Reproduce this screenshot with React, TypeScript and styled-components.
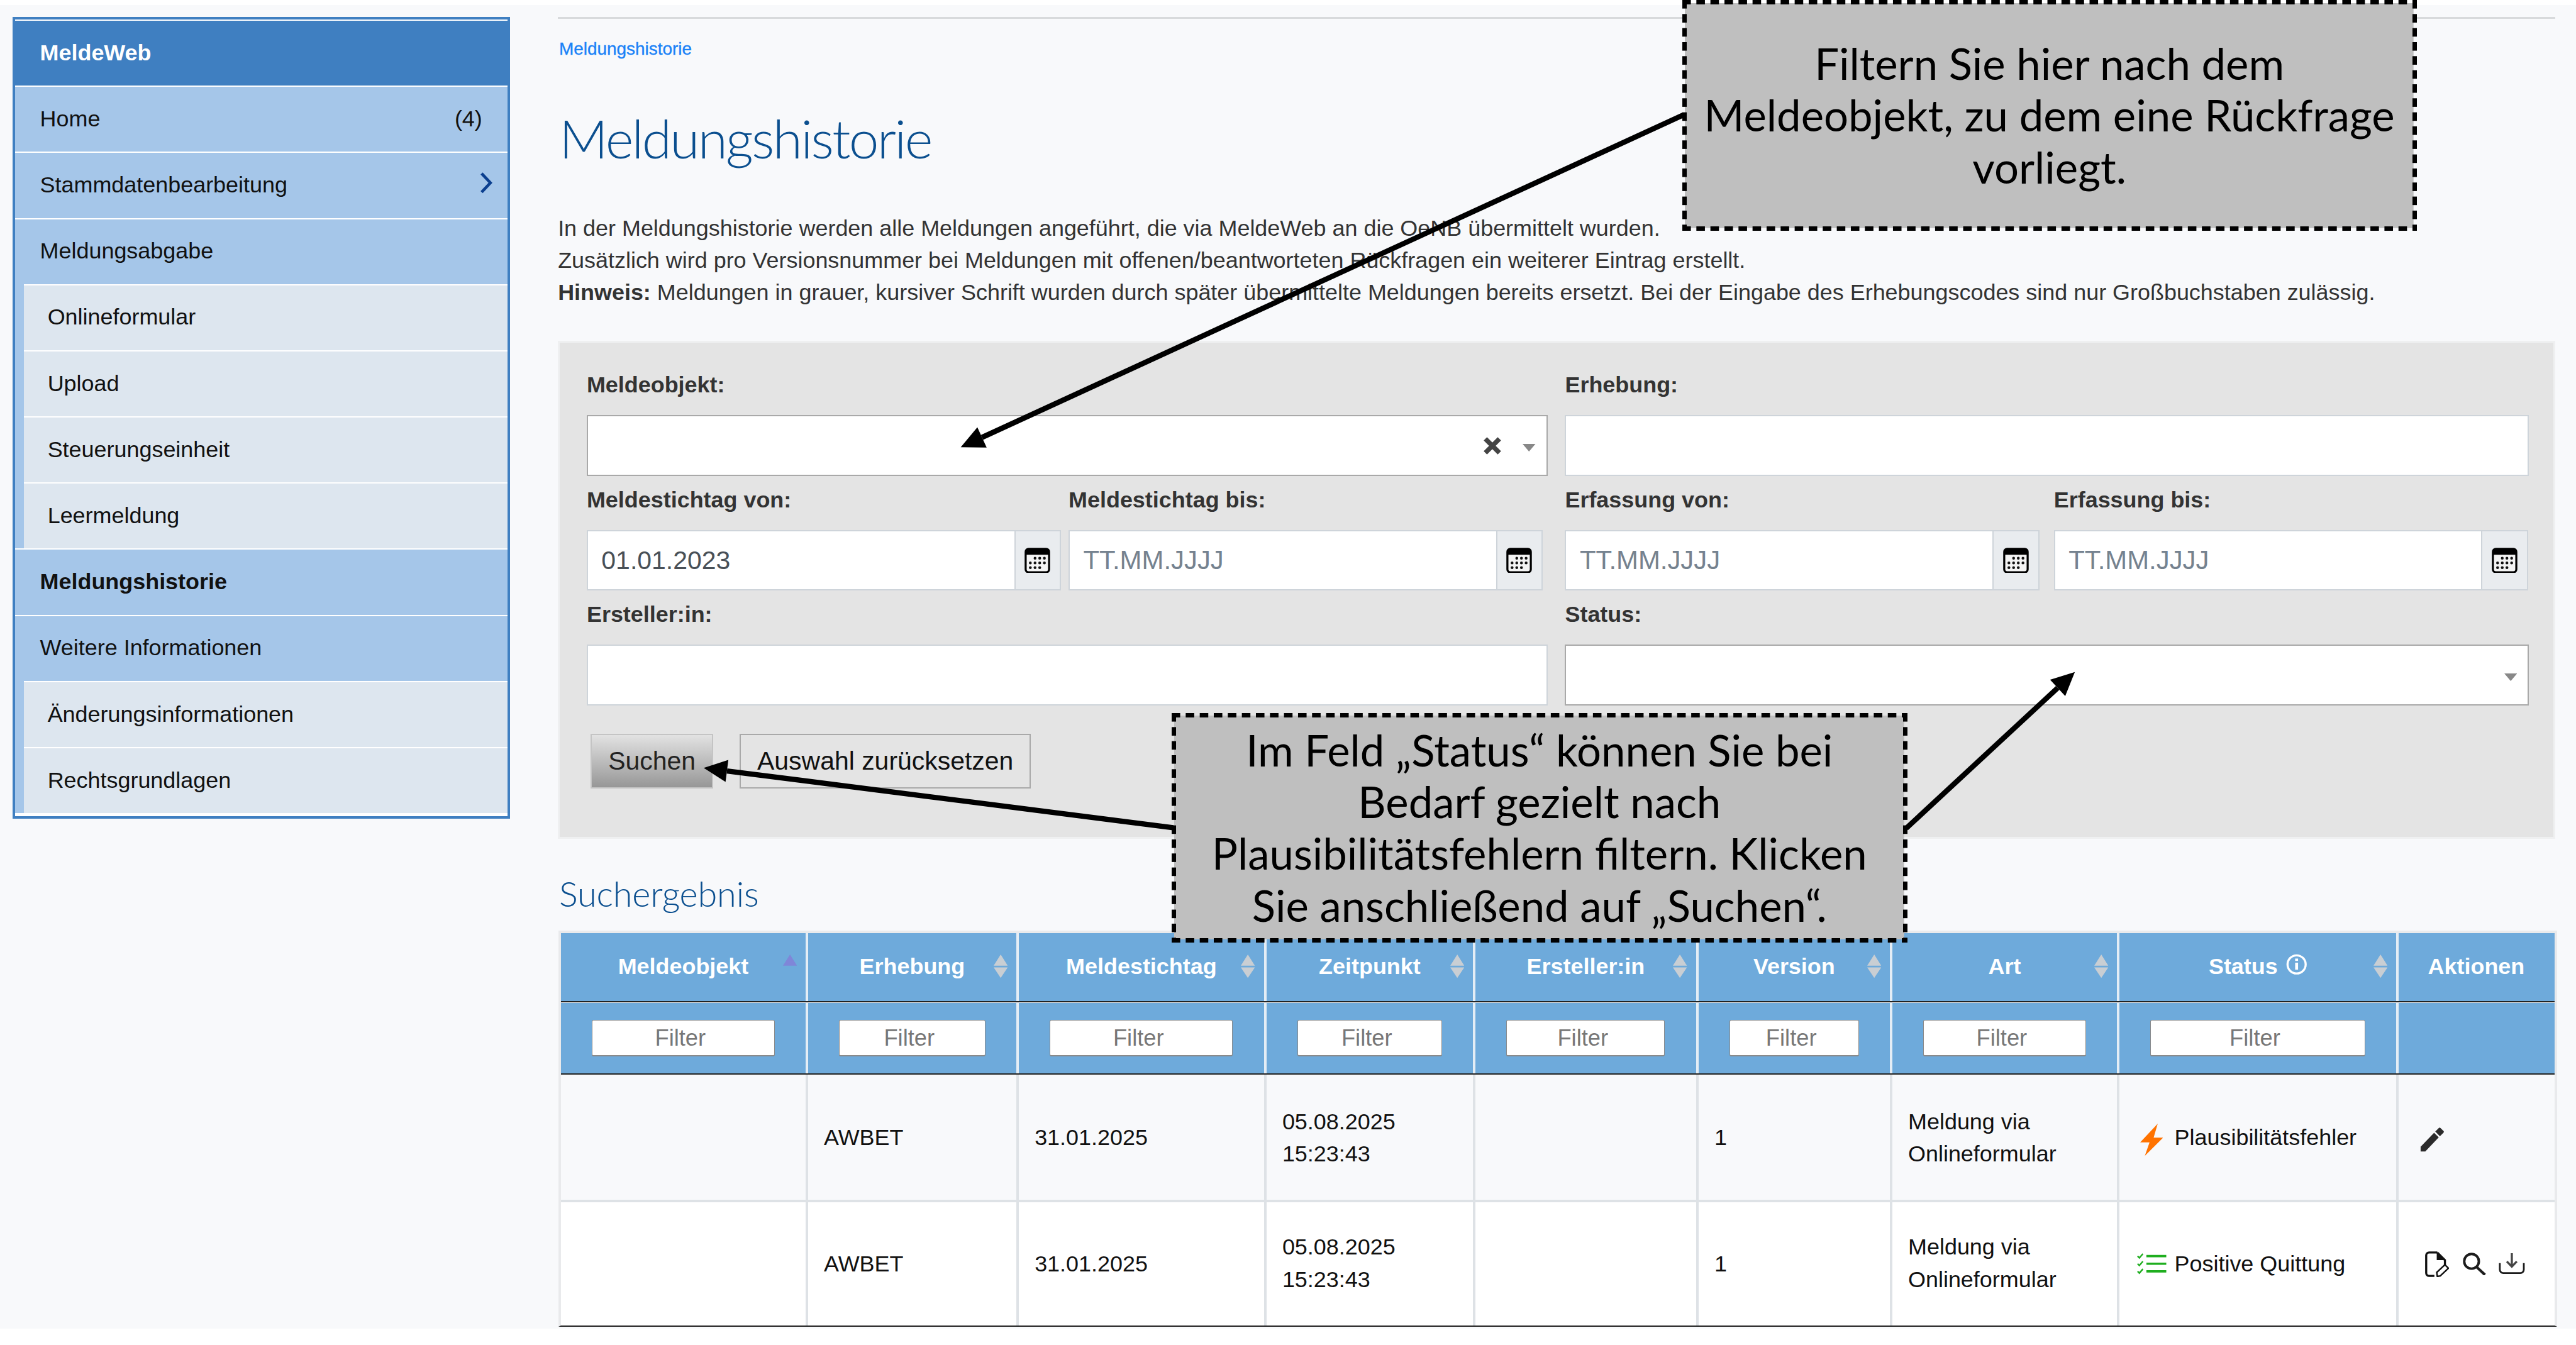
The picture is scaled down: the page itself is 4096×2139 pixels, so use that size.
import React from 'react';
import styled, { createGlobalStyle } from 'styled-components';

const GlobalStyle = createGlobalStyle`
    html, body {
        margin: 0;
        padding: 0;
        background: #ffffff;
        overflow: hidden;
    }
    * {
        box-sizing: border-box;
    }
`;

// the whole page is written in the reference's own pixels and zoomed down to the window
const Page = styled.div`
    position: relative;
    width: 4400px;
    height: 2298px;
    zoom: 0.930909;
    overflow: hidden;
    padding-top: 9px;
    font-family: "Liberation Sans", Arial, sans-serif;
    font-size: 38.6px;
    color: #212529;
`;

const Body = styled.div`
    display: flex;
    align-items: flex-start;
    height: 2261px;
    background: #f8f9fb;
    overflow: hidden;
`;

/* ---------- sidebar ---------- */

const Sidebar = styled.nav`
    flex: none;
    width: 849px;
    margin: 20px 0 0 22px;
    border: 5px solid #3f7fc1;
    background: #a5c6e9;
`;

const SideHeader = styled.div`
    display: flex;
    align-items: center;
    height: 113px;
    padding: 0 0 2px 42px;
    border-top: 3px solid #ffffff;
    background: #3f7fc1;
    color: #ffffff;
    font-weight: 700;
`;

const SideItem = styled.div<{ $bold?: boolean }>`
    display: flex;
    align-items: center;
    justify-content: space-between;
    height: 113px;
    padding: 0 43px 2px 42px;
    border-top: 3px solid #ffffff;
    color: #111111;
    font-weight: ${(p) => (p.$bold ? 700 : 400)};
`;

const SubList = styled.div`
    padding-left: 14px;
`;

const SubItem = styled.div`
    display: flex;
    align-items: center;
    height: 113px;
    padding: 0 0 2px 41px;
    border-top: 3px solid #ffffff;
    background: #dde6ef;
    color: #111111;
`;

const SideEnd = styled.div`
    height: 5px;
    background: #ffffff;
`;

const Chevron = styled.svg`
    width: 22px;
    height: 36px;
    margin: -6px -18px 0 0;
`;

/* ---------- main column ---------- */

const Main = styled.main`
    flex: none;
    width: 3415px;
    margin-left: 82px;
`;

const TopRule = styled.div`
    height: 3px;
    margin: 20px 3px 0 0;
    background: #d8dadc;
`;

const Breadcrumb = styled.div`
    margin: 34px 0 0 2px;
    font-size: 30px;
    line-height: 36px;
    color: #1a82f7;
    -webkit-text-stroke: 0.4px #1a82f7;
`;

const Title = styled.h1`
    margin: 79px 0 0 2px;
    font-family: Lato, "Open Sans", sans-serif;
    font-weight: 300;
    font-size: 92px;
    line-height: 110px;
    letter-spacing: -2.9px;
    color: #0b4f8f;
`;

const Intro = styled.p`
    margin: 71px 0 0;
    line-height: 55px;
    color: #333333;
    white-space: nowrap;
`;

/* ---------- filter form ---------- */

const FormPanel = styled.section`
    height: 851px;
    margin: 55px 3px 0 0;
    padding: 50px 0 0 46px;
    border: 4px solid #eff0f1;
    background: #e4e4e4;
`;

const FormRow = styled.div`
    display: grid;
    grid-template-columns: 1641px 1646px;
    column-gap: 30px;
    margin-bottom: 18px;
`;

const DateGroup = styled.div<{ $gap: number }>`
    display: grid;
    grid-template-columns: 810px 810px;
    column-gap: ${(p) => p.$gap}px;
`;

const Label = styled.label`
    display: block;
    height: 46px;
    margin-bottom: 28px;
    font-weight: 700;
    line-height: 46px;
    color: #333333;
`;

const TextInput = styled.input`
    display: block;
    width: 100%;
    height: 104px;
    padding: 0 23px;
    border: 3px solid #ced4da;
    border-radius: 0;
    outline: none;
    background: #ffffff;
    font-family: inherit;
    font-size: 44px;
    color: #495057;
`;

const SelectBox = styled.div`
    display: flex;
    align-items: center;
    justify-content: flex-end;
    gap: 37px;
    height: 104px;
    padding-right: 18px;
    border: 3px solid #a9a9a9;
    background: #ffffff;
`;

const ClearIcon = styled.svg`
    width: 30px;
    height: 30px;
`;

const Caret = styled.svg`
    width: 22px;
    height: 13px;
    margin-top: 8px;
`;

const DateBox = styled.div`
    display: flex;
    height: 104px;
`;

const DateInput = styled(TextInput)`
    flex: 1;
    min-width: 0;
    height: 100%;
    border-right: none;
    &::placeholder {
        color: #75828f;
        font-size: 45px;
        opacity: 1;
    }
`;

const DateAddon = styled.div`
    flex: none;
    display: flex;
    align-items: center;
    justify-content: center;
    width: 80px;
    border: 3px solid #ced4da;
    background: #e9ecef;
`;

const ButtonRow = styled.div`
    display: flex;
    gap: 45px;
    margin: 49px 0 0 7px;
`;

const SearchButton = styled.button`
    width: 209px;
    height: 93px;
    padding: 0;
    border: 3px solid #c4c4c4;
    background: linear-gradient(#e2e2e2, #979797);
    font-family: inherit;
    font-size: 44px;
    color: #222222;
`;

const ResetButton = styled(SearchButton)`
    width: 498px;
    border-color: #a9a9a9;
    background: #e4e4e4;
    color: #111111;
`;

/* ---------- result table ---------- */

const SectionTitle = styled.h2`
    margin: 57px 0 0 2px;
    font-family: Lato, "Open Sans", sans-serif;
    font-weight: 300;
    font-size: 60px;
    line-height: 72px;
    letter-spacing: -0.2px;
    color: #0b4f8f;
`;

const Table = styled.div`
    margin: 28px 0 0 1px;
    border: 5px solid #e9eaec;
    border-bottom: 3px solid #222222;
`;

const Row = styled.div`
    display: grid;
    grid-template-columns: 422px 360px 423px 357px 381px 331px 388px 477px 265px;
`;

const HeadRow = styled(Row)`
    height: 118px;
    border-bottom: 3px solid #222222;
    background: #6eaadb;
`;

const FilterRow = styled(Row)`
    height: 124px;
    border-top: 2px solid #e8eff5;
    border-bottom: 3px solid #222222;
    background: #6eaadb;
`;

const BodyRow = styled(Row)<{ $white?: boolean; $last?: boolean }>`
    height: ${(p) => (p.$last ? 210 : 218)}px;
    border-bottom: ${(p) => (p.$last ? 0 : 5)}px solid #dee2e6;
    background: ${(p) => (p.$white ? '#ffffff' : '#f8f9fb')};
`;

const HeadCell = styled.div`
    position: relative;
    display: flex;
    align-items: center;
    justify-content: center;
    gap: 14px;
    padding-bottom: 2px;
    border-right: 5px solid #e4edf5;
    color: #ffffff;
    font-weight: 700;
    &:last-child {
        border-right: none;
    }
`;

const SortMark = styled.svg`
    position: absolute;
    top: 36px;
    right: 15px;
    width: 24px;
    height: 40px;
`;

const InfoMark = styled.svg`
    width: 36px;
    height: 36px;
    margin-top: -8px;
`;

const FilterCell = styled.div`
    display: flex;
    align-items: center;
    padding: 0 53px;
    border-right: 5px solid #e4edf5;
    &:last-child {
        border-right: none;
    }
`;

const FilterInput = styled.input`
    width: 100%;
    height: 62px;
    padding: 0 10px 0 0;
    border: 2px solid #8a8a8a;
    border-bottom-width: 3px;
    border-radius: 3px;
    outline: none;
    background: #ffffff;
    font-family: inherit;
    font-size: 39px;
    text-align: center;
    &::placeholder {
        color: #777777;
        opacity: 1;
    }
`;

const Cell = styled.div<{ $lift?: number }>`
    display: flex;
    align-items: center;
    padding-left: 27px;
    padding-bottom: ${(p) => p.$lift ?? 0}px;
    border-right: 5px solid #dee2e6;
    line-height: 55px;
    color: #111111;
    &:last-child {
        border-right: none;
    }
`;

const StatusCell = styled(Cell)`
    gap: 14px;
    padding-left: 30px;
`;

const StatusSlot = styled.span<{ $drop?: number }>`
    flex: none;
    display: flex;
    justify-content: center;
    width: 50px;
    margin-top: ${(p) => p.$drop ?? 0}px;
`;

const ActionCell = styled(Cell)<{ $pad: number }>`
    padding-left: ${(p) => p.$pad}px;
    gap: 22px;
`;

const PencilSlot = styled.span`
    display: flex;
    margin-top: 7px;
`;

/* ---------- callouts ---------- */

// dashes longer than a css dashed border gives, so the frame is four repeating gradients
const Callout = styled.div<{ $left: number; $top: number; $width: number; $height: number }>`
    position: absolute;
    left: ${(p) => p.$left}px;
    top: ${(p) => p.$top}px;
    width: ${(p) => p.$width}px;
    height: ${(p) => p.$height}px;
    display: flex;
    align-items: center;
    justify-content: center;
    background:
        linear-gradient(to right, #000 62%, transparent 0) left top / 24px 7px repeat-x,
        linear-gradient(to right, #000 62%, transparent 0) left bottom / 24px 7px repeat-x,
        linear-gradient(to bottom, #000 62%, transparent 0) left top / 7px 24px repeat-y,
        linear-gradient(to bottom, #000 62%, transparent 0) right top / 7px 24px repeat-y,
        linear-gradient(#bfbfbf, #bfbfbf) center / calc(100% - 10px) calc(100% - 10px) no-repeat;
    font-family: Lato, sans-serif;
    font-size: 74px;
    line-height: 88.5px;
    text-align: center;
    color: #000000;
`;

const ArrowLayer = styled.svg`
    position: absolute;
    left: 0;
    top: 0;
    width: 4400px;
    height: 2298px;
    pointer-events: none;
`;

function Arrow({ x1, y1, x2, y2 }: { x1: number; y1: number; x2: number; y2: number }) {
    const len = Math.hypot(x2 - x1, y2 - y1);
    const ux = (x2 - x1) / len;
    const uy = (y2 - y1) / len;
    const bx = x2 - ux * 40;
    const by = y2 - uy * 40;
    const head = `${x2},${y2} ${bx - uy * 19},${by + ux * 19} ${bx + uy * 19},${by - ux * 19}`;
    return (
        <>
            <line x1={x1} y1={y1} x2={bx} y2={by} stroke="#000" strokeWidth="9" />
            <polygon points={head} fill="#000" />
        </>
    );
}

/* ---------- icons ---------- */

function CalendarIcon() {
    const dots = [
        [18, 18], [26, 18], [34, 18],
        [10, 26], [18, 26], [26, 26], [34, 26],
        [10, 34], [18, 34], [26, 34],
    ];
    return (
        <svg width="44" height="44" viewBox="0 0 44 44">
            <rect x="2" y="2" width="40" height="40" rx="5" fill="#f4f4f4" stroke="#000" strokeWidth="3.5" />
            <path d="M2 7a5 5 0 0 1 5-5h30a5 5 0 0 1 5 5v5H2z" fill="#000" />
            {dots.map(([x, y]) => (
                <circle key={`${x}-${y}`} cx={x} cy={y} r="2.4" fill="#111" />
            ))}
        </svg>
    );
}

function SortIcon({ active }: { active?: boolean }) {
    return (
        <SortMark viewBox="0 0 24 40">
            <polygon points="12,0 24,19 0,19" fill={active ? '#7f86d8' : '#c9ced3'} />
            {!active && <polygon points="0,22 24,22 12,40" fill="#c9ced3" />}
        </SortMark>
    );
}

function BoltIcon() {
    return (
        <svg width="39" height="55" viewBox="0 0 39 55">
            <polygon points="30,0 0,32 16,32 8,55 39,24 23,24" fill="#ff7300" />
        </svg>
    );
}

function CheckListIcon() {
    return (
        <svg width="50" height="36" viewBox="0 0 50 36" fill="none" stroke="#1fae1f">
            <path d="M16 5h34M16 18h34M16 31h34" strokeWidth="4" />
            <path d="M1 5l3 3 6-7M1 18l3 3 6-7M1 31l3 3 6-7" strokeWidth="2.6" />
        </svg>
    );
}

function PencilIcon() {
    return (
        <svg width="42" height="42" viewBox="0 0 42 42">
            <path d="M1 33v8h8L32 17l-8-8z" fill="#2b2b2b" />
            <path d="M34 15l6-6c1-1 1-2 0-3l-5-5c-1-1-2-1-3 0l-6 6z" fill="#2b2b2b" />
        </svg>
    );
}

function FilePenIcon() {
    return (
        <svg width="42" height="44" viewBox="0 0 42 44" fill="none">
            <path d="M22 2H8a5 5 0 0 0-5 5v30a5 5 0 0 0 5 5h9" stroke="#111" strokeWidth="3.6" />
            <path d="M22 2l13 13v9" stroke="#111" strokeWidth="3.6" />
            <path d="M21 1v14h14z" fill="#111" />
            <path d="M22 43l-1-7 14-13 6 6-14 13z" fill="#fff" stroke="#111" strokeWidth="2.6" />
        </svg>
    );
}

function SearchIcon() {
    return (
        <svg width="41" height="39" viewBox="0 0 41 39" fill="none" stroke="#1c1c1c">
            <circle cx="16" cy="15" r="12.5" strokeWidth="4.2" />
            <path d="M25 25l14 13" strokeWidth="4.6" />
        </svg>
    );
}

function DownloadIcon() {
    return (
        <svg width="45" height="36" viewBox="0 0 45 36" fill="none">
            <path d="M22.5 0v22M14 14l8.500 9 8.500-9" stroke="#444" strokeWidth="3.6" />
            <path d="M2 17v11a6 6 0 0 0 6 6h29a6 6 0 0 0 6-6V17" stroke="#1c1c1c" strokeWidth="3" />
        </svg>
    );
}

const columns = [
    { title: 'Meldeobjekt', filter: true, sort: 'asc' },
    { title: 'Erhebung', filter: true, sort: 'both' },
    { title: 'Meldestichtag', filter: true, sort: 'both' },
    { title: 'Zeitpunkt', filter: true, sort: 'both' },
    { title: 'Ersteller:in', filter: true, sort: 'both' },
    { title: 'Version', filter: true, sort: 'both' },
    { title: 'Art', filter: true, sort: 'both' },
    { title: 'Status', filter: true, sort: 'both', info: true },
    { title: 'Aktionen', filter: false, sort: '' },
];

function DateField({ label, value }: { label: string; value?: string }) {
    return (
        <div>
            <Label>{label}</Label>
            <DateBox>
                <DateInput readOnly placeholder="TT.MM.JJJJ" defaultValue={value} />
                <DateAddon>
                    <CalendarIcon />
                </DateAddon>
            </DateBox>
        </div>
    );
}

function ResultRow({ white, last, children }: { white?: boolean; last?: boolean; children: React.ReactNode }) {
    const lift = last ? 3 : 0;
    return (
        <BodyRow $white={white} $last={last}>
            <Cell />
            <Cell>AWBET</Cell>
            <Cell>31.01.2025</Cell>
            <Cell $lift={lift}>
                <div>05.08.2025<br />15:23:43</div>
            </Cell>
            <Cell />
            <Cell>1</Cell>
            <Cell $lift={lift}>
                <div>Meldung via<br />Onlineformular</div>
            </Cell>
            {children}
        </BodyRow>
    );
}

export default function App() {
    return (
        <Page>
            <GlobalStyle />
            <Body>
                <Sidebar>
                    <SideHeader>MeldeWeb</SideHeader>
                    <SideItem>
                        Home <span>(4)</span>
                    </SideItem>
                    <SideItem>
                        Stammdatenbearbeitung
                        <Chevron viewBox="0 0 22 36" fill="none" stroke="#0b3f8f" strokeWidth="5">
                            <path d="M3 2l15 16L3 34" />
                        </Chevron>
                    </SideItem>
                    <SideItem>Meldungsabgabe</SideItem>
                    <SubList>
                        <SubItem>Onlineformular</SubItem>
                        <SubItem>Upload</SubItem>
                        <SubItem>Steuerungseinheit</SubItem>
                        <SubItem>Leermeldung</SubItem>
                    </SubList>
                    <SideItem $bold>Meldungshistorie</SideItem>
                    <SideItem>Weitere Informationen</SideItem>
                    <SubList>
                        <SubItem>Änderungsinformationen</SubItem>
                        <SubItem>Rechtsgrundlagen</SubItem>
                    </SubList>
                    <SideEnd />
                </Sidebar>

                <Main>
                    <TopRule />
                    <Breadcrumb>Meldungshistorie</Breadcrumb>
                    <Title>Meldungshistorie</Title>
                    <Intro>
                        In der Meldungshistorie werden alle Meldungen angeführt, die via MeldeWeb an die OeNB übermittelt wurden.
                        <br />
                        Zusätzlich wird pro Versionsnummer bei Meldungen mit offenen/beantworteten Rückfragen ein weiterer Eintrag erstellt.
                        <br />
                        <b>Hinweis:</b> Meldungen in grauer, kursiver Schrift wurden durch später übermittelte Meldungen bereits ersetzt. Bei der Eingabe des Erhebungscodes sind nur Großbuchstaben zulässig.
                    </Intro>

                    <FormPanel>
                        <FormRow>
                            <div>
                                <Label>Meldeobjekt:</Label>
                                <SelectBox>
                                    <ClearIcon viewBox="0 0 30 30" stroke="#444" strokeWidth="8">
                                        <path d="M3 3l24 24M27 3L3 27" />
                                    </ClearIcon>
                                    <Caret viewBox="0 0 22 13">
                                        <polygon points="0,0 22,0 11,13" fill="#888" />
                                    </Caret>
                                </SelectBox>
                            </div>
                            <div>
                                <Label>Erhebung:</Label>
                                <TextInput readOnly />
                            </div>
                        </FormRow>
                        <FormRow>
                            <DateGroup $gap={13}>
                                <DateField label="Meldestichtag von:" value="01.01.2023" />
                                <DateField label="Meldestichtag bis:" />
                            </DateGroup>
                            <DateGroup $gap={25}>
                                <DateField label="Erfassung von:" />
                                <DateField label="Erfassung bis:" />
                            </DateGroup>
                        </FormRow>
                        <FormRow>
                            <div>
                                <Label>Ersteller:in:</Label>
                                <TextInput readOnly />
                            </div>
                            <div>
                                <Label>Status:</Label>
                                <SelectBox>
                                    <Caret viewBox="0 0 22 13">
                                        <polygon points="0,0 22,0 11,13" fill="#888" />
                                    </Caret>
                                </SelectBox>
                            </div>
                        </FormRow>
                        <ButtonRow>
                            <SearchButton>Suchen</SearchButton>
                            <ResetButton>Auswahl zurücksetzen</ResetButton>
                        </ButtonRow>
                    </FormPanel>

                    <SectionTitle>Suchergebnis</SectionTitle>
                    <Table>
                        <HeadRow>
                            {columns.map((c) => (
                                <HeadCell key={c.title}>
                                    {c.title}
                                    {c.info && (
                                        <InfoMark viewBox="0 0 36 36" fill="none" stroke="#fff">
                                            <circle cx="18" cy="18" r="15.500" strokeWidth="3.6" />
                                            <path d="M18 15v12" strokeWidth="5" />
                                            <path d="M18 8v4" strokeWidth="5" />
                                        </InfoMark>
                                    )}
                                    {c.sort && <SortIcon active={c.sort === 'asc'} />}
                                </HeadCell>
                            ))}
                        </HeadRow>
                        <FilterRow>
                            {columns.map((c) => (
                                <FilterCell key={c.title}>
                                    {c.filter && <FilterInput readOnly placeholder="Filter" />}
                                </FilterCell>
                            ))}
                        </FilterRow>
                        <ResultRow>
                            <StatusCell>
                                <StatusSlot $drop={8}><BoltIcon /></StatusSlot>
                                Plausibilitätsfehler
                            </StatusCell>
                            <ActionCell $pad={36}>
                                <PencilSlot><PencilIcon /></PencilSlot>
                            </ActionCell>
                        </ResultRow>
                        <ResultRow white last>
                            <StatusCell>
                                <StatusSlot><CheckListIcon /></StatusSlot>
                                Positive Quittung
                            </StatusCell>
                            <ActionCell $pad={44}>
                                <FilePenIcon />
                                <SearchIcon />
                                <DownloadIcon />
                            </ActionCell>
                        </ResultRow>
                    </Table>
                </Main>
            </Body>

            <ArrowLayer viewBox="0 0 4400 2298">
                <Arrow x1={2876} y1={196} x2={1641} y2={764} />
                <Arrow x1={2004} y1={1414} x2={1202} y2={1312} />
                <Arrow x1={3256} y1={1415} x2={3544} y2={1148} />
            </ArrowLayer>

            <Callout $left={2873} $top={0} $width={1255} $height={394}>
                <div>
                    Filtern Sie hier nach dem<br />
                    Meldeobjekt, zu dem eine Rückfrage<br />
                    vorliegt.
                </div>
            </Callout>
            <Callout $left={2001} $top={1218} $width={1257} $height={392}>
                <div>
                    Im Feld „Status“ können Sie bei<br />
                    Bedarf gezielt nach<br />
                    Plausibilitätsfehlern filtern. Klicken<br />
                    Sie anschließend auf „Suchen“.
                </div>
            </Callout>
        </Page>
    );
}
